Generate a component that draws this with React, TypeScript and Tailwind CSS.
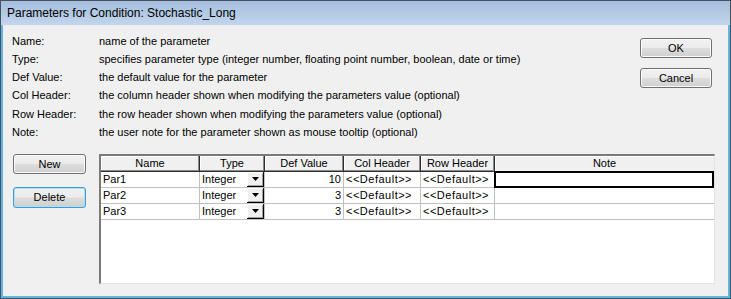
import React from "react";

const HELP = [
  { label: "Name:", text: "name of the parameter" },
  {
    label: "Type:",
    text: "specifies parameter type (integer number, floating point number, boolean, date or time)",
  },
  { label: "Def Value:", text: "the default value for the parameter" },
  {
    label: "Col Header:",
    text: "the column header shown when modifying the parameters value (optional)",
  },
  {
    label: "Row Header:",
    text: "the row header shown when modifying the parameters value (optional)",
  },
  {
    label: "Note:",
    text: "the user note for the parameter shown as mouse tooltip (optional)",
  },
];

const PARAMS = [
  { name: "Par1", type: "Integer", def: "10" },
  { name: "Par2", type: "Integer", def: "3" },
  { name: "Par3", type: "Integer", def: "3" },
];

function WinButton({
  label,
  focused = false,
  className = "",
}: {
  label: string;
  focused?: boolean;
  className?: string;
}) {
  return (
    <div
      className={`flex items-center justify-center rounded-[3px] border text-black bg-[linear-gradient(to_bottom,#f2f2f2_0%,#ebebeb_48%,#dddddd_52%,#cfcfcf_100%)] ${
        focused
          ? "border-[#3c9ad6] shadow-[inset_0_0_0_1px_#a8e0f8]"
          : "border-[#707070] shadow-[inset_0_0_0_1px_#fbfbfb]"
      } ${className}`}
    >
      {label}
    </div>
  );
}

function HeaderCell({ label, className }: { label: string; className: string }) {
  return (
    <div
      className={`h-[16px] shrink-0 flex items-center justify-center border-r border-b border-[#2f2f2f] bg-[#f0f0f0] shadow-[inset_-1px_-1px_0_#8a8a8a,inset_1px_1px_0_#ffffff] ${className}`}
    >
      {label}
    </div>
  );
}

function DropButton() {
  return (
    <div className="w-[17px] h-full shrink-0 flex items-center justify-center bg-[#f0f0f0] border-r border-b border-black shadow-[inset_1px_1px_0_#ffffff,inset_-1px_-1px_0_#a0a0a0]">
      <svg width="7" height="4" viewBox="0 0 7 4">
        <path d="M0 0h7L3.5 4z" fill="#000" />
      </svg>
    </div>
  );
}

export default function App() {
  return (
    <div className="w-[731px] h-[299px] flex flex-col border border-[#44515e] bg-[#f0f0f0] font-['Liberation_Sans',Arial,sans-serif] text-[11px] text-black">
      {/* title bar */}
      <div className="h-[24px] shrink-0 flex items-center pl-[6px] pb-[1px] text-[12px] bg-[linear-gradient(to_bottom,#a4bedc,#c2d6ec)]">
        Parameters for Condition: Stochastic_Long
      </div>

      <div className="flex-1 flex flex-col border-x-2 border-b-2 border-[#5fb5e4] pl-[9px] pr-[13px]">
        {/* help text + dialog buttons */}
        <div className="flex justify-between pt-[7px] pr-[3px]">
          <div className="flex flex-col">
            {HELP.map((h) => (
              <div key={h.label} className="flex h-[18.2px] items-center">
                <span className="w-[87px]">{h.label}</span>
                <span>{h.text}</span>
              </div>
            ))}
          </div>
          <div className="flex flex-col gap-[10px] pt-[6px]">
            <WinButton label="OK" className="w-[72px] h-[20px]" />
            <WinButton label="Cancel" className="w-[72px] h-[20px]" />
          </div>
        </div>

        {/* grid area */}
        <div className="flex gap-[13px] mt-[13px] pl-[1px]">
          <div className="flex flex-col gap-[13px] shrink-0">
            <WinButton label="New" className="w-[73px] h-[20px]" />
            <WinButton label="Delete" focused className="w-[73px] h-[21px]" />
          </div>

          <div className="w-[616px] h-[130px] shrink-0 bg-white border-l-2 border-t-2 border-[#7a7a7a] border-r border-b border-r-[#e3e3e3] border-b-[#e3e3e3] flex flex-col">
            <div className="flex">
              <HeaderCell label="Name" className="w-[99px]" />
              <HeaderCell label="Type" className="w-[65px]" />
              <HeaderCell label="Def Value" className="w-[79px]" />
              <HeaderCell label="Col Header" className="w-[77px]" />
              <HeaderCell label="Row Header" className="w-[74px]" />
              <div className="flex-1 h-[16px] flex items-center justify-center border-b border-[#a0a0a0] bg-[#f0f0f0] shadow-[inset_1px_1px_0_#ffffff]">
                Note
              </div>
            </div>

            {PARAMS.map((p, i) => (
              <div key={p.name} className="flex h-[16px]">
                <div className="w-[99px] shrink-0 flex items-center pl-[2px] border-r border-b border-[#c0c0c0]">
                  {p.name}
                </div>
                <div className="w-[65px] shrink-0 flex items-center justify-between pl-[2px] border-r border-b border-[#c0c0c0]">
                  <span>{p.type}</span>
                  <DropButton />
                </div>
                <div className="w-[79px] shrink-0 flex items-center justify-end pr-[2px] border-r border-b border-[#c0c0c0]">
                  {p.def}
                </div>
                <div className="w-[77px] shrink-0 flex items-center pl-[2px] tracking-[0.5px] border-r border-b border-[#c0c0c0]">
                  {"<<Default>>"}
                </div>
                <div className="w-[74px] shrink-0 flex items-center pl-[2px] tracking-[0.5px] border-r border-b border-[#c0c0c0]">
                  {"<<Default>>"}
                </div>
                <div className="flex-1 relative border-b border-[#c0c0c0]">
                  {i === 0 && (
                    <span className="absolute -left-[1px] -top-[1px] right-0 bottom-[-1px] border-2 border-black" />
                  )}
                </div>
              </div>
            ))}
          </div>
        </div>
      </div>
    </div>
  );
}
